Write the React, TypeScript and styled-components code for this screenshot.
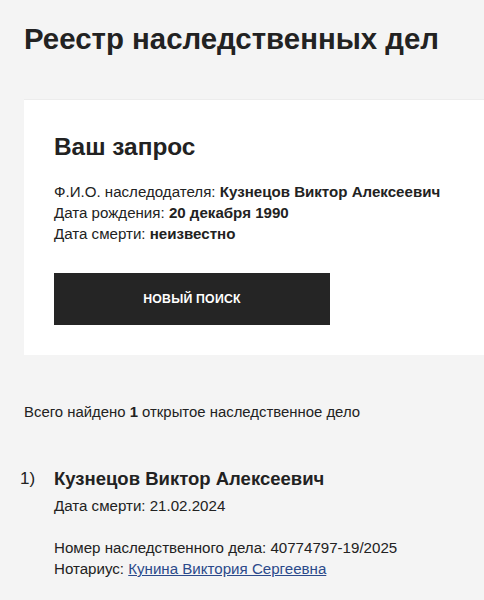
import * as React from 'react';
import styled, { createGlobalStyle } from 'styled-components';

const GlobalStyle = createGlobalStyle`
  html, body {
    margin: 0;
    padding: 0;
    background: #f4f4f4;
  }
  body {
    font-family: 'Liberation Sans', Arial, sans-serif;
    color: #222;
  }
`;

const Page = styled.div`
  padding: 20px 0 0 24px;
`;

const Title = styled.h1`
  margin: 0;
  font-size: 29.4px;
  line-height: 38px;
  font-weight: 700;
  color: #222;
`;

const Card = styled.section`
  margin-top: 41px;
  background: #fff;
  border-top: 1px solid #ececec;
  padding: 33px 30px 30px 30px;
`;

const CardTitle = styled.h2`
  margin: 0;
  font-size: 24.4px;
  line-height: 28px;
  font-weight: 700;
`;

const InfoList = styled.div`
  margin-top: 20px;
  font-size: 15.1px;
  line-height: 21px;
`;

const Button = styled.button`
  display: flex;
  align-items: center;
  justify-content: center;
  margin-top: 29px;
  width: 276px;
  height: 52px;
  border: none;
  background: #252525;
  color: #fff;
  font-family: 'Liberation Sans', Arial, sans-serif;
  font-size: 12.3px;
  font-weight: 700;
  text-transform: uppercase;
  letter-spacing: 0.2px;
  cursor: pointer;
`;

const Summary = styled.p`
  margin: 47px 0 0 0;
  font-size: 14.9px;
  line-height: 20px;
`;

const CaseList = styled.ol`
  list-style: none;
  margin: 44px 0 0 0;
  padding: 0;
`;

const CaseItem = styled.li`
  display: grid;
  grid-template-columns: 30px 1fr;
`;

const CaseIndex = styled.span`
  margin-left: -4px;
  font-size: 17px;
  line-height: 26px;
`;

const CaseName = styled.div`
  font-size: 18.5px;
  line-height: 26px;
  font-weight: 700;
`;

const CaseLine = styled.div<{ $gap?: number }>`
  margin-top: ${(p) => p.$gap ?? 0}px;
  font-size: 15.1px;
  line-height: 21px;
`;

const NotaryLink = styled.a`
  color: #2b4a8b;
  text-decoration: underline;
`;

const App = () => (
  <Page>
    <GlobalStyle />
    <Title>Реестр наследственных дел</Title>
    <Card>
      <CardTitle>Ваш запрос</CardTitle>
      <InfoList>
        <div>
          Ф.И.О. наследодателя: <b>Кузнецов Виктор Алексеевич</b>
        </div>
        <div>
          Дата рождения: <b>20 декабря 1990</b>
        </div>
        <div>
          Дата смерти: <b>неизвестно</b>
        </div>
      </InfoList>
      <Button>Новый поиск</Button>
    </Card>
    <Summary>
      Всего найдено <b>1</b> открытое наследственное дело
    </Summary>
    <CaseList>
      <CaseItem>
        <CaseIndex>1)</CaseIndex>
        <div>
          <CaseName>Кузнецов Виктор Алексеевич</CaseName>
          <CaseLine $gap={3}>Дата смерти: 21.02.2024</CaseLine>
          <CaseLine $gap={21}>Номер наследственного дела: 40774797-19/2025</CaseLine>
          <CaseLine>
            Нотариус: <NotaryLink href="#">Кунина Виктория Сергеевна</NotaryLink>
          </CaseLine>
        </div>
      </CaseItem>
    </CaseList>
  </Page>
);

export default App;
